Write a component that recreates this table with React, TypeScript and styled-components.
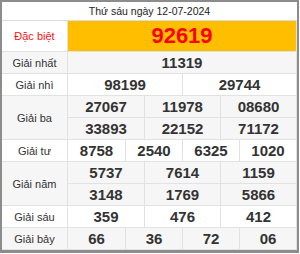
import React from 'react';
import styled, { createGlobalStyle } from 'styled-components';

type PrizeRow = {
  label: string;
  cols: number;
  numbers: string[];
  shade?: boolean;
};

const prizes: PrizeRow[] = [
  { label: 'Giải nhất', cols: 1, numbers: ['11319'], shade: true },
  { label: 'Giải nhì', cols: 2, numbers: ['98199', '29744'] },
  {
    label: 'Giải ba',
    cols: 3,
    numbers: ['27067', '11978', '08680', '33893', '22152', '71172'],
    shade: true,
  },
  { label: 'Giải tư', cols: 4, numbers: ['8758', '2540', '6325', '1020'] },
  {
    label: 'Giải năm',
    cols: 3,
    numbers: ['5737', '7614', '1159', '3148', '1769', '5866'],
    shade: true,
  },
  { label: 'Giải sáu', cols: 3, numbers: ['359', '476', '412'] },
  { label: 'Giải bảy', cols: 4, numbers: ['66', '36', '72', '06'], shade: true },
];

const GlobalStyle = createGlobalStyle`
  body {
    margin: 0;
    background: #fff;
  }
`;

const Frame = styled.div`
  width: 299px;
  box-sizing: border-box;
  border: 2px solid #8c8c8c;
  border-bottom-width: 3px;
  background: #fff;
  font-family: 'Liberation Sans', Arial, sans-serif;
`;

const Header = styled.div`
  height: 18px;
  line-height: 19px;
  text-align: center;
  font-size: 10.5px;
  color: #222;
  border-bottom: 1px solid #dcdcdc;
`;

const Row = styled.div<{ $shade?: boolean }>`
  display: flex;
  background: ${(p) => (p.$shade ? '#f6f6f6' : '#fff')};
  border-bottom: 1px solid #e2e2e2;
`;

const Label = styled.div<{ $special?: boolean }>`
  width: 65px;
  flex-shrink: 0;
  display: flex;
  align-items: center;
  justify-content: center;
  border-right: 1px solid #e2e2e2;
  font-size: 11px;
  color: ${(p) => (p.$special ? '#ff1111' : '#333')};
  background: ${(p) => (p.$special ? '#fff' : 'transparent')};
`;

const SpecialCell = styled.div`
  flex: 1;
  height: 30px;
  display: flex;
  align-items: center;
  justify-content: center;
  background: #ffbf00;
  color: #ff0000;
  font-size: 22px;
  font-weight: bold;
  border-right: 1px solid #e2e2e2;
`;

const Cells = styled.div<{ $cols: number }>`
  flex: 1;
  display: grid;
  grid-template-columns: repeat(${(p) => p.$cols}, 1fr);
  border-right: 1px solid #e2e2e2;
`;

const Cell = styled.div<{ $firstCol: boolean; $firstRow: boolean }>`
  height: 21px;
  display: flex;
  align-items: center;
  justify-content: center;
  font-size: 15px;
  font-weight: bold;
  color: #333;
  border-left: ${(p) => (p.$firstCol ? 'none' : '1px solid #e2e2e2')};
  border-top: ${(p) => (p.$firstRow ? 'none' : '1px solid #e2e2e2')};
`;

const App: React.FC = () => {
  return (
    <>
      <GlobalStyle />
      <Frame>
        <Header>Thứ sáu ngày 12-07-2024</Header>
        <Row>
          <Label $special>Đặc biệt</Label>
          <SpecialCell>92619</SpecialCell>
        </Row>
        {prizes.map((prize) => (
          <Row key={prize.label} $shade={prize.shade}>
            <Label>{prize.label}</Label>
            <Cells $cols={prize.cols}>
              {prize.numbers.map((num, i) => (
                <Cell
                  key={i}
                  $firstCol={i % prize.cols === 0}
                  $firstRow={i < prize.cols}>
                  {num}
                </Cell>
              ))}
            </Cells>
          </Row>
        ))}
      </Frame>
    </>
  );
};

export default App;
